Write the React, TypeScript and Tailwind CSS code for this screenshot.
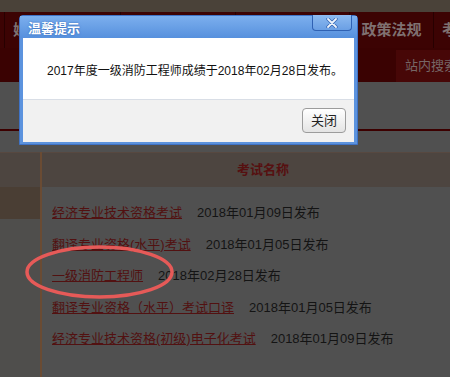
import React from "react";

const rows = [
  { name: "经济专业技术资格考试", date: "2018年01月09日发布" },
  { name: "翻译专业资格(水平)考试", date: "2018年01月05日发布" },
  { name: "一级消防工程师", date: "2018年02月28日发布" },
  { name: "翻译专业资格（水平）考试口译", date: "2018年01月05日发布" },
  { name: "经济专业技术资格(初级)电子化考试", date: "2018年01月09日发布" },
];

function NoticeDialog() {
  return (
    <div className="absolute left-[19px] top-[15px] w-[339px] h-[130px] rounded-t-[4px] border border-[#3f73c6] bg-[#5c93de] flex flex-col">
      <div className="relative h-[22px] bg-gradient-to-b from-[#7cafee] to-[#5690dd]">
        <span className="pl-[8px] text-[13px] font-bold leading-[22px] text-white [text-shadow:0_0_2px_#2c5fb0]">
          温馨提示
        </span>
        <button className="absolute right-[5px] top-[-1px] w-[40px] h-[16px] rounded-b-[4px] border border-t-0 border-[#2f61b3] bg-gradient-to-b from-[#8dbaf0] to-[#6a9fe4] flex items-center justify-center">
          <svg width="12" height="10" viewBox="0 0 12 10">
            <path d="M2 1 L10 9 M10 1 L2 9" stroke="#3766b4" strokeWidth="3.4" strokeLinecap="round" />
            <path d="M2 1 L10 9 M10 1 L2 9" stroke="#eef4fc" strokeWidth="1.8" strokeLinecap="round" />
          </svg>
        </button>
      </div>
      <div className="mx-[3px] mb-[2px] flex-1 flex flex-col bg-white">
        <div className="h-[61px] pl-[24px] pt-[25px] text-[12px] leading-[16px] text-[#111]">
          2017年度一级消防工程师成绩于2018年02月28日发布。
        </div>
        <div className="flex-1 bg-[#f1f1f1] border-t border-[#d9dee6] flex justify-end items-start pt-[8px] pr-[8px]">
          <button className="w-[44px] h-[25px] rounded-[4px] border border-[#9c9c9c] bg-gradient-to-b from-white to-[#e4e4e4] text-[13px] text-[#222]">
            关闭
          </button>
        </div>
      </div>
    </div>
  );
}

export default function App() {
  return (
    <div className="relative w-[450px] h-[377px] overflow-hidden bg-[#505050] font-['Liberation_Sans','Noto_Sans_CJK_SC',sans-serif]">
      <div className="h-[12px] bg-[#4a4239]" />
      <nav className="flex h-[36px] bg-[#3c0303] text-[15px] font-bold text-[#7f7171] whitespace-nowrap overflow-hidden">
        <div className="w-[5px] shrink-0 border-r border-[#270000]" />
        <div className="w-[115px] shrink-0 pl-[8px] flex items-center">媒体聚焦</div>
        <div className="w-[115px] shrink-0 border-l border-[#270000]" />
        <div className="w-[114px] shrink-0 border-l border-[#270000]" />
        <div className="w-[84px] shrink-0 border-l border-[#270000] flex items-center justify-center">政策法规</div>
        <div className="w-[80px] shrink-0 border-l border-[#270000] pl-[8px] flex items-center">考试报名</div>
      </nav>
      <div className="flex h-[34px] bg-[#3a0202] justify-end">
        <div className="w-[54px] mt-[2px] bg-[#470707] pl-[9px] pt-[8px] text-[13px] leading-[16px] text-[#766666] whitespace-nowrap overflow-hidden">
          站内搜索
        </div>
      </div>
      <div className="h-[47px]" />
      <div className="h-[2px] bg-[#3c0000]" />
      <div className="h-[21px]" />
      <div className="flex h-[225px]">
        <div className="w-[42px] shrink-0 border-r-2 border-[#6a4b33] flex flex-col">
          <div className="h-[35px] bg-[#4d4540] border-t border-[#574840]" />
          <div className="h-[32px] bg-[#4a3e34]" />
          <div className="flex-1 bg-[#4f4e4c]" />
        </div>
        <div className="flex-1 flex flex-col">
          <div className="h-[35px] bg-[#4d4540] border-t border-[#574840] flex items-center pl-[195px] text-[13px] font-bold text-[#561010]">
            考试名称
          </div>
          <div className="pt-[10px] flex flex-col">
            {rows.map((r) => (
              <div key={r.name} className="h-[31.5px] flex items-center pl-[10px] text-[13px] whitespace-nowrap">
                <a className="text-[#521111] underline">{r.name}</a>
                <span className="ml-[15px] text-[#141414]">{r.date}</span>
              </div>
            ))}
          </div>
        </div>
      </div>
      <svg className="absolute left-[25px] top-[245px]" width="150" height="54" viewBox="0 0 150 54">
        <ellipse cx="74.5" cy="27" rx="72.5" ry="25" fill="none" stroke="#e65a58" strokeWidth="3.5" />
      </svg>
      <NoticeDialog />
    </div>
  );
}
